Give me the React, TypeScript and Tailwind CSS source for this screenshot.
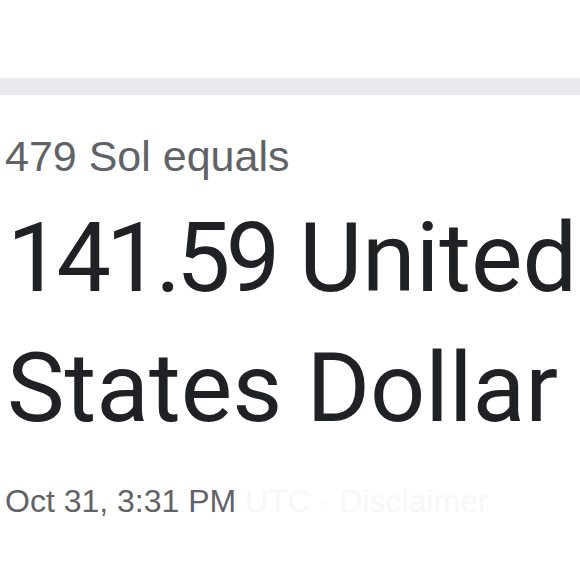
export default function App() {
  return (
    <div className="w-[580px] h-[580px] bg-white overflow-hidden">
      <div className="h-[78px]" />
      <div className="h-[17px] bg-[#e9eaee]" />
      <div className="pl-[5px] pt-[37px]">
        <p className="text-[43px] leading-[48px] text-[#5f6368] font-['Liberation_Sans',Arial,sans-serif] whitespace-nowrap">
          479 Sol equals
        </p>
        <p className="mt-[13px] pl-[2px] text-[97px] leading-[130px] text-[#202124] font-['Roboto',sans-serif] whitespace-nowrap">
          <span className="tracking-[-5px]">141.59</span> United
          <br />
          States Dollar
        </p>
        <p className="mt-[28px] text-[32px] leading-[40px] whitespace-nowrap font-['Liberation_Sans',Arial,sans-serif]">
          <span className="text-[#5f6368]">Oct 31, 3:31 PM</span>
          <span className="text-[#f7f7f8]"> UTC · Disclaimer</span>
        </p>
      </div>
    </div>
  );
}
